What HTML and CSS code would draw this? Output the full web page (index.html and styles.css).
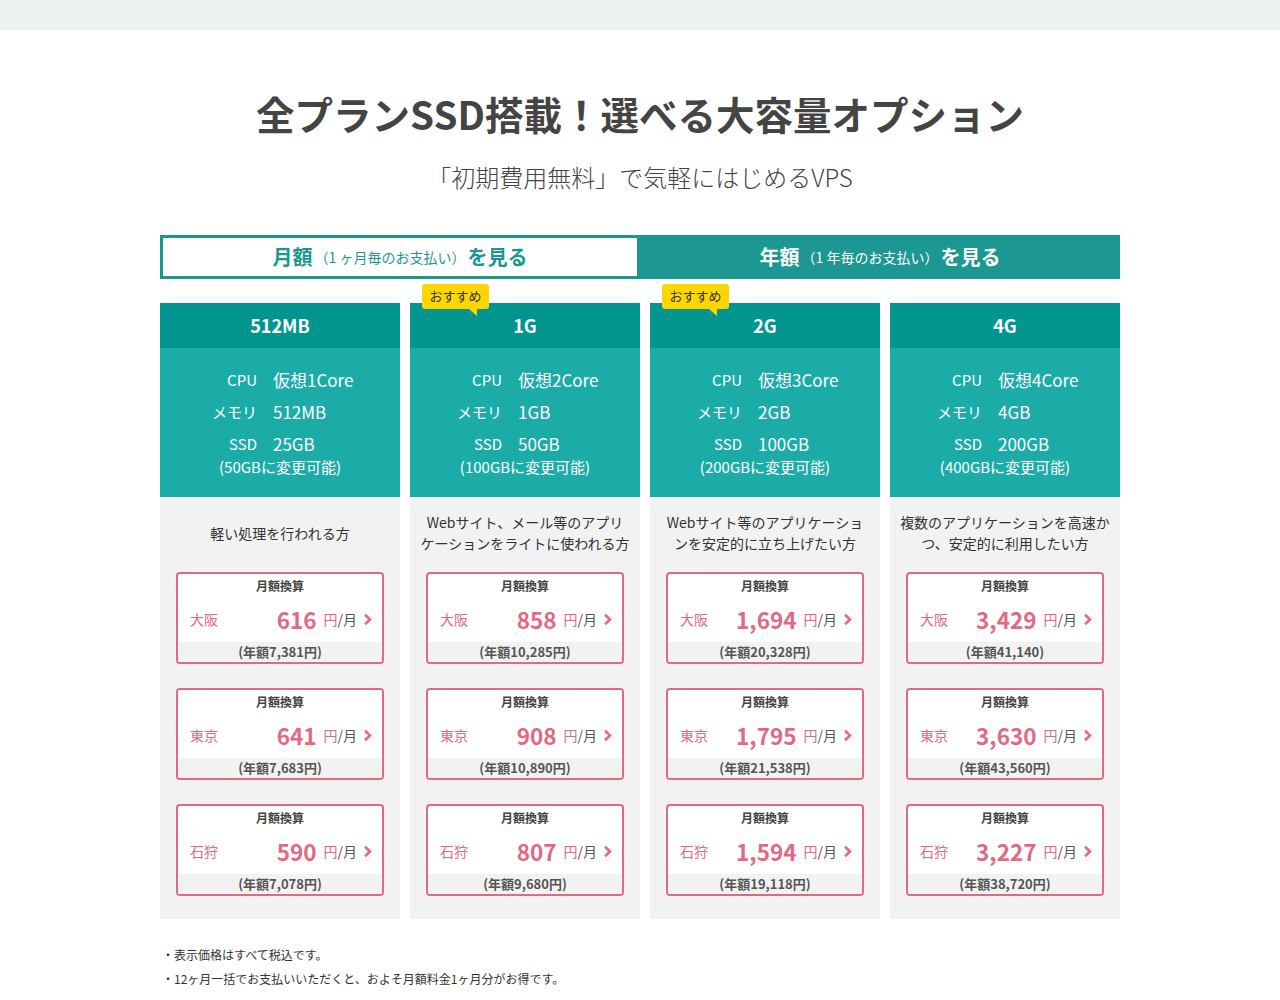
FILE: index.html
```html
<!DOCTYPE html>
<html lang="ja">
<head>
<meta charset="utf-8">
<title>全プランSSD搭載！選べる大容量オプション</title>
<link rel="stylesheet" href="styles.css">
</head>
<body>
<div class="topbar"></div>
<main class="wrap">
  <h1 class="title">全プランSSD搭載！選べる大容量オプション</h1>
  <p class="subtitle">「初期費用無料」で気軽にはじめるVPS</p>

  <div class="tabs">
    <div class="tab tab-active"><span class="tab-main">月額</span><span class="tab-sub">（1 ヶ月毎のお支払い）</span><span class="tab-main">を見る</span></div>
    <div class="tab tab-other"><span class="tab-main">年額</span><span class="tab-sub">（1 年毎のお支払い）</span><span class="tab-main">を見る</span></div>
  </div>

  <div class="plans">
    <!-- 512MB -->
    <section class="plan">
      <h2 class="plan-name">512MB</h2>
      <div class="spec">
        <dl class="spec-grid">
          <dt>CPU</dt><dd>仮想1Core</dd>
          <dt>メモリ</dt><dd>512MB</dd>
          <dt>SSD</dt><dd>25GB</dd>
        </dl>
        <p class="spec-note">(50GBに変更可能)</p>
      </div>
      <div class="plan-body">
        <p class="desc">軽い処理を行われる方</p>
        <a class="price"><div class="price-head">月額換算</div><div class="price-main"><span class="city">大阪</span><span class="num">616</span><span class="unit"><em>円</em>/月</span><svg class="chev" viewBox="0 0 9 13" width="9" height="13"><polyline points="2,1.8 7,6.5 2,11.2"/></svg></div><div class="price-foot">(年額7,381円)</div></a>
        <a class="price"><div class="price-head">月額換算</div><div class="price-main"><span class="city">東京</span><span class="num">641</span><span class="unit"><em>円</em>/月</span><svg class="chev" viewBox="0 0 9 13" width="9" height="13"><polyline points="2,1.8 7,6.5 2,11.2"/></svg></div><div class="price-foot">(年額7,683円)</div></a>
        <a class="price"><div class="price-head">月額換算</div><div class="price-main"><span class="city">石狩</span><span class="num">590</span><span class="unit"><em>円</em>/月</span><svg class="chev" viewBox="0 0 9 13" width="9" height="13"><polyline points="2,1.8 7,6.5 2,11.2"/></svg></div><div class="price-foot">(年額7,078円)</div></a>
      </div>
    </section>

    <!-- 1G -->
    <section class="plan">
      <span class="badge">おすすめ</span>
      <h2 class="plan-name">1G</h2>
      <div class="spec">
        <dl class="spec-grid">
          <dt>CPU</dt><dd>仮想2Core</dd>
          <dt>メモリ</dt><dd>1GB</dd>
          <dt>SSD</dt><dd>50GB</dd>
        </dl>
        <p class="spec-note">(100GBに変更可能)</p>
      </div>
      <div class="plan-body">
        <p class="desc">Webサイト、メール等のアプリ<br>ケーションをライトに使われる方</p>
        <a class="price"><div class="price-head">月額換算</div><div class="price-main"><span class="city">大阪</span><span class="num">858</span><span class="unit"><em>円</em>/月</span><svg class="chev" viewBox="0 0 9 13" width="9" height="13"><polyline points="2,1.8 7,6.5 2,11.2"/></svg></div><div class="price-foot">(年額10,285円)</div></a>
        <a class="price"><div class="price-head">月額換算</div><div class="price-main"><span class="city">東京</span><span class="num">908</span><span class="unit"><em>円</em>/月</span><svg class="chev" viewBox="0 0 9 13" width="9" height="13"><polyline points="2,1.8 7,6.5 2,11.2"/></svg></div><div class="price-foot">(年額10,890円)</div></a>
        <a class="price"><div class="price-head">月額換算</div><div class="price-main"><span class="city">石狩</span><span class="num">807</span><span class="unit"><em>円</em>/月</span><svg class="chev" viewBox="0 0 9 13" width="9" height="13"><polyline points="2,1.8 7,6.5 2,11.2"/></svg></div><div class="price-foot">(年額9,680円)</div></a>
      </div>
    </section>

    <!-- 2G -->
    <section class="plan">
      <span class="badge">おすすめ</span>
      <h2 class="plan-name">2G</h2>
      <div class="spec">
        <dl class="spec-grid">
          <dt>CPU</dt><dd>仮想3Core</dd>
          <dt>メモリ</dt><dd>2GB</dd>
          <dt>SSD</dt><dd>100GB</dd>
        </dl>
        <p class="spec-note">(200GBに変更可能)</p>
      </div>
      <div class="plan-body">
        <p class="desc">Webサイト等のアプリケーショ<br>ンを安定的に立ち上げたい方</p>
        <a class="price"><div class="price-head">月額換算</div><div class="price-main"><span class="city">大阪</span><span class="num">1,694</span><span class="unit"><em>円</em>/月</span><svg class="chev" viewBox="0 0 9 13" width="9" height="13"><polyline points="2,1.8 7,6.5 2,11.2"/></svg></div><div class="price-foot">(年額20,328円)</div></a>
        <a class="price"><div class="price-head">月額換算</div><div class="price-main"><span class="city">東京</span><span class="num">1,795</span><span class="unit"><em>円</em>/月</span><svg class="chev" viewBox="0 0 9 13" width="9" height="13"><polyline points="2,1.8 7,6.5 2,11.2"/></svg></div><div class="price-foot">(年額21,538円)</div></a>
        <a class="price"><div class="price-head">月額換算</div><div class="price-main"><span class="city">石狩</span><span class="num">1,594</span><span class="unit"><em>円</em>/月</span><svg class="chev" viewBox="0 0 9 13" width="9" height="13"><polyline points="2,1.8 7,6.5 2,11.2"/></svg></div><div class="price-foot">(年額19,118円)</div></a>
      </div>
    </section>

    <!-- 4G -->
    <section class="plan">
      <h2 class="plan-name">4G</h2>
      <div class="spec">
        <dl class="spec-grid">
          <dt>CPU</dt><dd>仮想4Core</dd>
          <dt>メモリ</dt><dd>4GB</dd>
          <dt>SSD</dt><dd>200GB</dd>
        </dl>
        <p class="spec-note">(400GBに変更可能)</p>
      </div>
      <div class="plan-body">
        <p class="desc">複数のアプリケーションを高速か<br>つ、安定的に利用したい方</p>
        <a class="price"><div class="price-head">月額換算</div><div class="price-main"><span class="city">大阪</span><span class="num">3,429</span><span class="unit"><em>円</em>/月</span><svg class="chev" viewBox="0 0 9 13" width="9" height="13"><polyline points="2,1.8 7,6.5 2,11.2"/></svg></div><div class="price-foot">(年額41,140)</div></a>
        <a class="price"><div class="price-head">月額換算</div><div class="price-main"><span class="city">東京</span><span class="num">3,630</span><span class="unit"><em>円</em>/月</span><svg class="chev" viewBox="0 0 9 13" width="9" height="13"><polyline points="2,1.8 7,6.5 2,11.2"/></svg></div><div class="price-foot">(年額43,560円)</div></a>
        <a class="price"><div class="price-head">月額換算</div><div class="price-main"><span class="city">石狩</span><span class="num">3,227</span><span class="unit"><em>円</em>/月</span><svg class="chev" viewBox="0 0 9 13" width="9" height="13"><polyline points="2,1.8 7,6.5 2,11.2"/></svg></div><div class="price-foot">(年額38,720円)</div></a>
      </div>
    </section>
  </div>

  <ul class="notes">
    <li>表示価格はすべて税込です。</li>
    <li>12ヶ月一括でお支払いいただくと、およそ月額料金1ヶ月分がお得です。</li>
  </ul>
</main>
</body>
</html>
```

FILE: styles.css
```css
* { box-sizing: border-box; }

body {
  margin: 0;
  background: #ffffff;
  color: #333333;
  font-family: "Noto Sans CJK JP", "Noto Sans", sans-serif;
}

.topbar {
  height: 30px;
  background: #eef1f2;
}

.wrap {
  width: 960px;
  margin: 0 auto;
}

.title {
  margin: 0;
  padding-top: 57px;
  font-size: 38.5px;
  line-height: 52px;
  font-weight: 700;
  color: #444444;
  text-align: center;
}

.subtitle {
  margin: 21px 0 0;
  font-size: 24px;
  line-height: 34px;
  font-weight: 300;
  color: #444444;
  text-align: center;
}

/* tabs */
.tabs {
  margin-top: 41px;
  display: grid;
  grid-template-columns: 1fr 1fr;
  height: 44px;
}

.tab {
  display: flex;
  align-items: center;
  justify-content: center;
  height: 44px;
}

.tab-active {
  border: 3px solid #1c9790;
  background: #ffffff;
  color: #1c9790;
}

.tab-other {
  background: #1c9791;
  color: #ffffff;
}

.tab-main {
  font-size: 20px;
  font-weight: 700;
  line-height: 1;
}

.tab-sub {
  font-size: 14px;
  line-height: 1;
  margin: 0 2px;
}

/* plans */
.plans {
  margin-top: 24px;
  display: grid;
  grid-template-columns: 240px 230px 230px 230px;
  column-gap: 10px;
}

.plan {
  position: relative;
  display: flex;
  flex-direction: column;
}

.badge {
  position: absolute;
  left: 12px;
  top: -19px;
  width: 67px;
  height: 25px;
  background: #ffd600;
  border-radius: 3px;
  color: #333333;
  font-size: 13px;
  line-height: 23px;
  text-align: center;
  z-index: 2;
}

.badge::after {
  content: "";
  position: absolute;
  right: 12px;
  bottom: -7px;
  border-top: 7px solid #ffd600;
  border-left: 8px solid transparent;
}

.plan-name {
  margin: 0;
  height: 45px;
  background: #00968f;
  color: #ffffff;
  font-size: 18px;
  font-weight: 700;
  line-height: 45px;
  text-align: center;
}

.spec {
  height: 149px;
  padding-top: 16px;
  background: #1cacA8;
  color: #ffffff;
}

.spec-grid {
  margin: 0;
  display: grid;
  grid-template-columns: 80px 110px;
  column-gap: 16px;
  justify-content: center;
}

.spec-grid dt {
  text-align: right;
  font-size: 15px;
  line-height: 32px;
}

.spec-grid dd {
  margin: 0;
  text-align: left;
  font-size: 17px;
  line-height: 32px;
}

.spec-note {
  margin: 0;
  text-align: center;
  font-size: 15px;
  line-height: 14px;
}

.plan-body {
  flex: 1;
  background: #f2f2f2;
  padding: 15px 16px 23px;
  display: flex;
  flex-direction: column;
  gap: 24px;
}

.desc {
  margin: 0 -8px -6px;
  height: 42px;
  display: flex;
  align-items: center;
  justify-content: center;
  text-align: center;
  font-size: 14px;
  line-height: 21px;
  color: #333333;
}

.price {
  display: block;
  height: 92px;
  border: 2px solid #e16a82;
  border-radius: 4px;
  background: #ffffff;
  overflow: hidden;
}

.price-head {
  height: 23px;
  font-size: 12px;
  font-weight: 700;
  line-height: 24px;
  color: #444444;
  text-align: center;
}

.price-main {
  height: 45px;
  display: flex;
  align-items: center;
  padding: 0 10px 1px 12px;
}

.city {
  font-size: 14px;
  line-height: 1;
  color: #e16a82;
}

.num {
  flex: 1;
  text-align: right;
  font-size: 22.5px;
  font-weight: 700;
  line-height: 1;
  color: #e16a82;
  padding-top: 1px;
}

.unit {
  margin-left: 7px;
  font-size: 14px;
  line-height: 1;
  color: #555555;
}

.unit em {
  font-style: normal;
  color: #e16a82;
}

.chev {
  margin-left: 6px;
  fill: none;
  stroke: #e16a82;
  stroke-width: 2.6;
}

.price-foot {
  height: 22px;
  background: #f2f2f2;
  font-size: 13px;
  font-weight: 700;
  line-height: 20px;
  color: #555555;
  text-align: center;
}

/* notes */
.notes {
  list-style: none;
  margin: 24px 0 0;
  padding: 0 0 0 2px;
  font-size: 12px;
  line-height: 24px;
  color: #333333;
}

.notes li::before {
  content: "・";
}
```
